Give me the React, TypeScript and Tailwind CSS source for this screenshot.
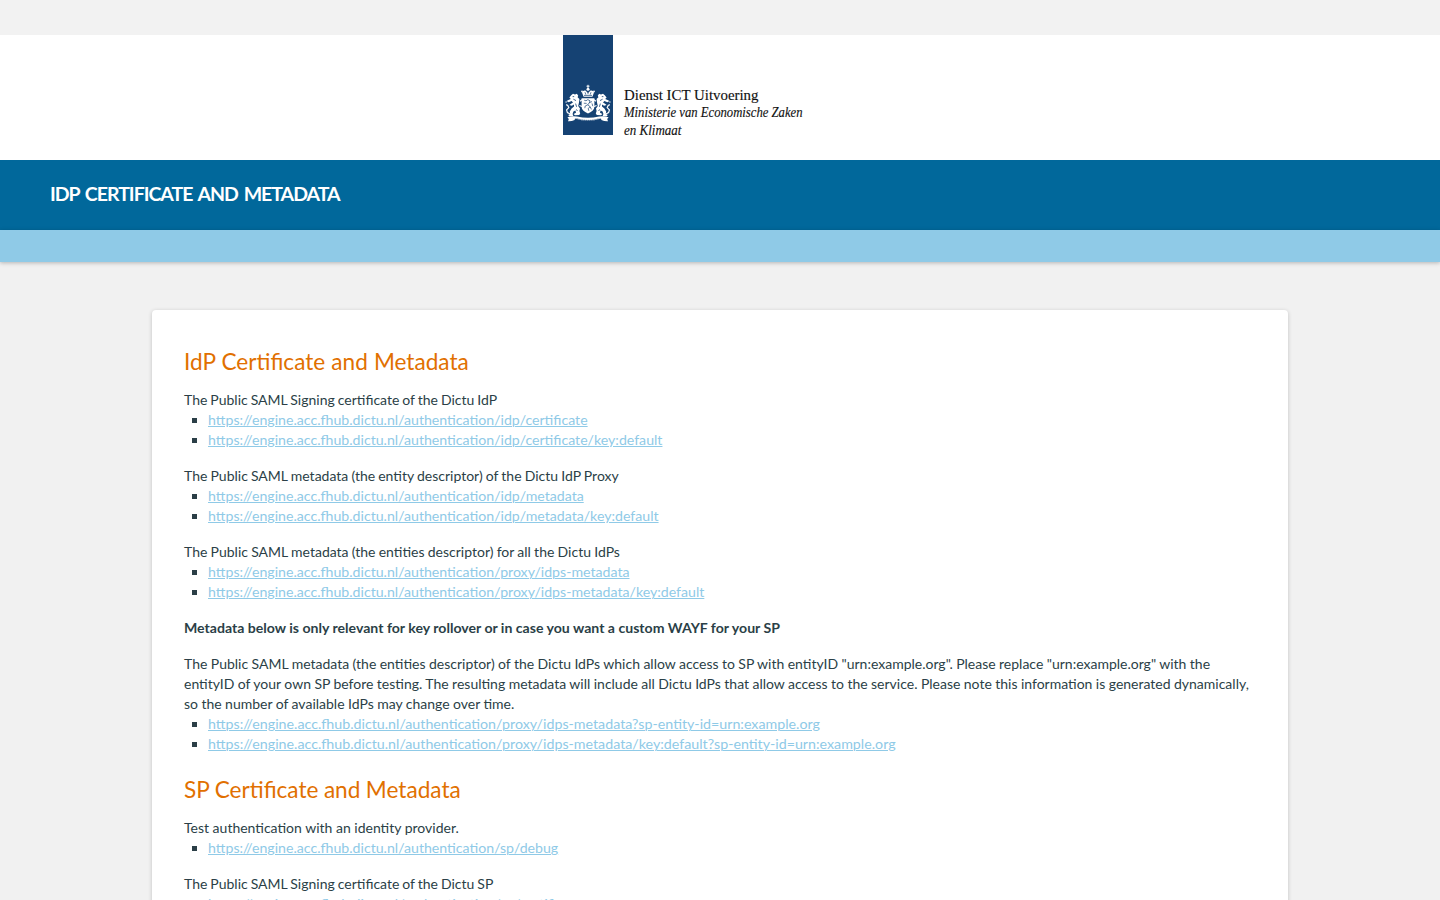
import type { ReactNode } from 'react';

const BASE = 'https://engine.acc.fhub.dictu.nl/authentication/';

function Lion() {
  return (
    <g>
      <path
        d="M8.2 60.2 10 58.8 12 59.4 13.8 58.8 15.2 60.6 14.6 62.3 16.4 64 16 67.5 15.2 71 17 73.6 16.4 76 17.2 78.4 16.2 80 12 80.2 10.6 79 13 77.8 12.4 75.6 10.4 76.6 9.6 79 10.4 81.2 6.2 81.2 5.2 80 7.2 79 6.8 76.4 8.6 73.4 11 71.6 11 69.4 8.8 70.8 6.4 70 8 68.8 10 67.4 8.6 66 5.6 67.2 3.6 66 5.4 65 7.8 64 6.4 62.4Z"
        fill="#fff"
      />
      <path
        d="M7.2 79 4.4 77.6 3.6 74.8 5.8 72.6 4.8 70.4 3.2 69.6M3.4 66.4 2.8 67.6M17 66.2 19.4 64.6M16.4 70.5 19 71.5"
        fill="none"
        stroke="#fff"
        strokeWidth="1.2"
      />
      <path d="M9.6 61.6h1.6M10.4 64.2l2.6 1.4M12.6 68.6l1 3.2M13.4 74.4l1 1.6" stroke="#154273" strokeWidth=".8" />
    </g>
  );
}

function Logo() {
  return (
    <svg width="250" height="108" viewBox="0 0 250 108" className="block" role="img">
      <rect width="50" height="100" fill="#154273" />
      <g>
        <path d="M25 49.8v4M23.5 51.2h3" stroke="#fff" strokeWidth="1" />
        <circle cx="25" cy="54.3" r="1.5" fill="#fff" />
        <path d="M20.6 61.8 19 57.4Q20 55.2 22.4 55.6L25 58 27.6 55.6Q30 55.2 31 57.4L29.4 61.8Z" fill="#fff" />
        <path d="M22 57.2l.8 2.4M28 57.2l-.8 2.4M25 56.2v3M21 60.4h8" stroke="#154273" strokeWidth=".7" />
        <circle cx="19" cy="56.4" r=".9" fill="#fff" />
        <circle cx="31" cy="56.4" r=".9" fill="#fff" />
        <path d="M18.6 63.2h12.8v8.6q0 4-6.4 6.6-6.4-2.6-6.4-6.6Z" fill="#fff" />
        <path
          d="M21.2 65.2l1.8.6 1.8-1.2 2.2 1.2-.6 1.8 2.6-1M26.6 67.4l-1.8 2.4 2.4 2 1.2 2.6M24.8 69.8l-2.6 1.2-.4 2.2M27.2 71.8l-2 1.6.6 2.4M20.8 68.2l2.8.2M29 68.4l.8 2.8"
          fill="none"
          stroke="#154273"
          strokeWidth=".7"
        />
        <Lion />
        <g transform="translate(50 0) scale(-1 1)">
          <Lion />
        </g>
        <path
          d="M4.4 82.2Q9 80.6 14 81.4 25 84.2 36 81.4 41 80.6 45.6 82.2L44.2 84 45 86.2Q41.4 86.4 38.4 85L38 83.4Q25 87.8 12 83.4L11.6 85Q8.6 86.4 5 86.2L5.8 84Z"
          fill="#fff"
        />
        <path d="M13.6 83.6Q25 87.2 36.4 83.6" stroke="#154273" strokeWidth=".8" strokeDasharray="1.2 .7" fill="none" />
      </g>
      <g fill="#111" stroke="#111" strokeWidth=".15" fontFamily="'Liberation Serif', serif" fontSize="15.5">
        <text x="61" y="65" textLength="134.5" lengthAdjust="spacingAndGlyphs">
          Dienst ICT Uitvoering
        </text>
        <text x="61" y="82" fontStyle="italic" textLength="178.5" lengthAdjust="spacingAndGlyphs">
          Ministerie van Economische Zaken
        </text>
        <text x="61" y="100" fontStyle="italic" textLength="57.5" lengthAdjust="spacingAndGlyphs">
          en Klimaat
        </text>
      </g>
    </svg>
  );
}

function Section({ children, links = [] }: { children: ReactNode; links?: string[] }) {
  return (
    <section className="mb-4">
      {children}
      <ul>
        {links.map((path) => (
          <li key={path} className="flex h-5 items-center pl-2">
            <span className="mr-[11px] mt-px size-[5px] bg-[#2b3f47]" />
            <a
              href={BASE + path}
              className={`whitespace-nowrap leading-5 text-[#8fcae7] underline decoration-1 underline-offset-1 ${
                path.includes('?') ? 'text-[14.24px]' : 'text-[14.15px]'
              }`}
            >
              {BASE + path}
            </a>
          </li>
        ))}
      </ul>
    </section>
  );
}

export default function App() {
  return (
    <div className="flex h-[900px] flex-col overflow-hidden bg-[#f1f1f1] font-['Lato',sans-serif] text-[14px] leading-5 text-[#2b3f47]">
      <div className="h-[35px] shrink-0 bg-[#f2f2f2]" />
      <header className="h-[125px] shrink-0 bg-white pl-[563px]">
        <Logo />
      </header>
      <div className="flex h-[70px] shrink-0 items-center bg-[#01689b] pb-0.5 pl-[50px]">
        <h1 className="text-[19.5px] leading-6 font-bold tracking-[-1px] text-white [word-spacing:2px]">
          IDP CERTIFICATE AND METADATA
        </h1>
      </div>
      <div className="h-8 shrink-0 bg-[#8fcae7] shadow-[0_1px_4px_rgba(0,0,0,0.25)]" />
      <main className="mx-auto mt-12 min-h-[640px] w-[1136px] rounded-[4px] bg-white px-8 pt-9 shadow-[0_1px_4px_rgba(0,0,0,0.2)]">
        <h2 className="mb-3 text-[22.6px] leading-8 text-[#e17000] [word-spacing:0.3px]">IdP Certificate and Metadata</h2>
        <Section links={['idp/certificate', 'idp/certificate/key:default']}>
          <p className="[word-spacing:-0.6px]">The Public SAML Signing certificate of the Dictu IdP</p>
        </Section>
        <Section links={['idp/metadata', 'idp/metadata/key:default']}>
          <p className="[word-spacing:-0.45px]">The Public SAML metadata (the entity descriptor) of the Dictu IdP Proxy</p>
        </Section>
        <Section links={['proxy/idps-metadata', 'proxy/idps-metadata/key:default']}>
          <p className="[word-spacing:-0.35px]">The Public SAML metadata (the entities descriptor) for all the Dictu IdPs</p>
        </Section>
        <Section>
          <p className="text-[14.1px] font-bold">
            Metadata below is only relevant for key rollover or in case you want a custom WAYF for your SP
          </p>
        </Section>
        <Section
          links={[
            'proxy/idps-metadata?sp-entity-id=urn:example.org',
            'proxy/idps-metadata/key:default?sp-entity-id=urn:example.org',
          ]}
        >
          <p className="[word-spacing:-0.15px]">
            The Public SAML metadata (the entities descriptor) of the Dictu IdPs which allow access to SP with entityID
            "urn:example.org". Please replace "urn:example.org" with the entityID of your own SP before testing. The
            resulting metadata will include all Dictu IdPs that allow access to the service. Please note this
            information is generated dynamically, so the number of available IdPs may change over time.
          </p>
        </Section>
        <h2 className="mt-5 mb-3 text-[22.6px] leading-8 text-[#e17000] [word-spacing:-0.3px]">SP Certificate and Metadata</h2>
        <Section links={['sp/debug']}>
          <p>Test authentication with an identity provider.</p>
        </Section>
        <Section links={['sp/certificate']}>
          <p className="[word-spacing:-0.6px]">The Public SAML Signing certificate of the Dictu SP</p>
        </Section>
      </main>
    </div>
  );
}
